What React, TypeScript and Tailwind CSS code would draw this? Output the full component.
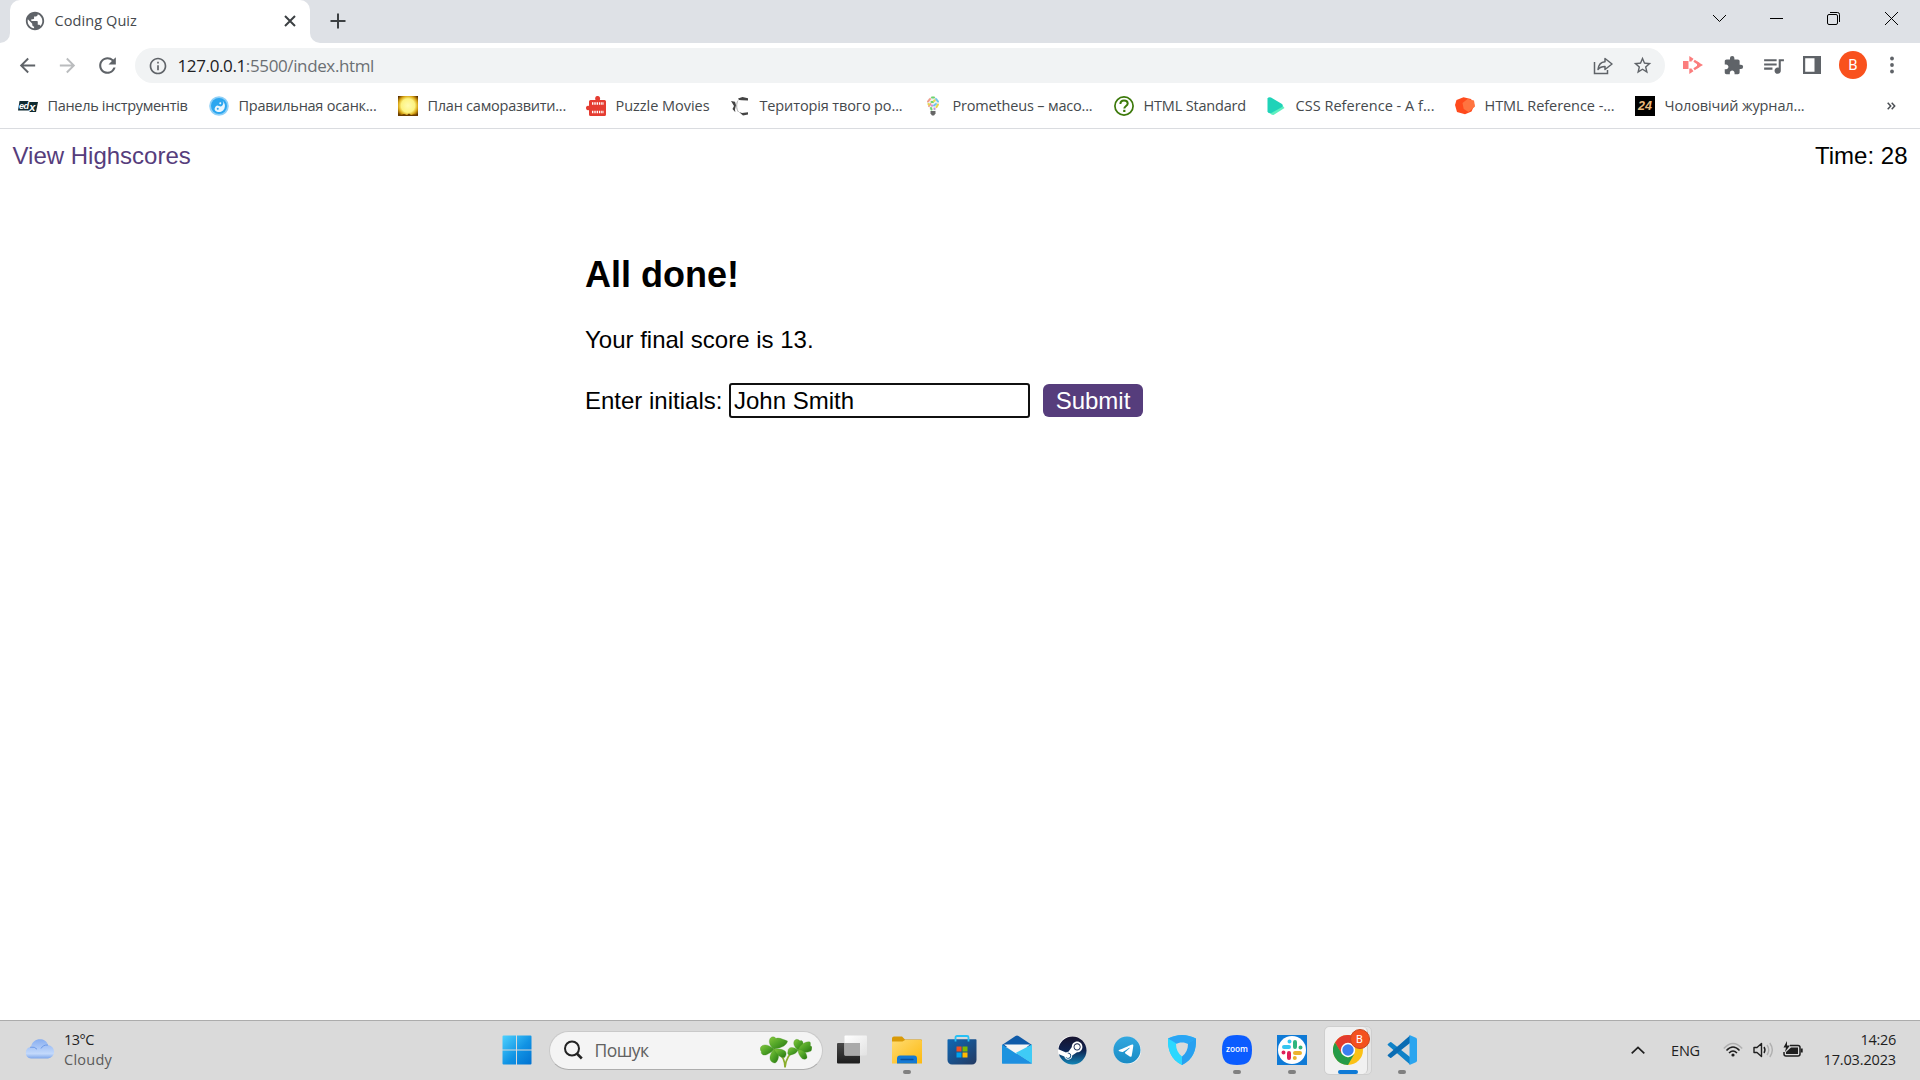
import React, { useLayoutEffect, useRef, useState } from "react";
import { MdArrowBack, MdArrowForward, MdExtension, MdInfoOutline, MdPublic, MdQueueMusic, MdRefresh, MdStarBorder } from "react-icons/md";
import { FaSteam, FaTelegram } from "react-icons/fa6";

/** Single line of text whose letter spacing is adjusted to fill a given width. */
function Fit({ w, className = "", children }: { w: number; className?: string; children: React.ReactNode }) {
  const ref = useRef<HTMLSpanElement>(null);
  const [spacing, setSpacing] = useState(0);
  useLayoutEffect(() => {
    const el = ref.current;
    if (!el) return;
    const count = (el.textContent || "").length;
    setSpacing((w - el.getBoundingClientRect().width) / count);
  }, [w]);
  return (
    <span ref={ref} className={"inline-block whitespace-nowrap shrink-0 " + className} style={{ letterSpacing: spacing }}>
      {children}
    </span>
  );
}

function Globe() {
  return <MdPublic className="size-[22px] text-[#5f6368]" />;
}

function EdxIcon() {
  return (
    <svg viewBox="0 0 20 20" className="size-5">
      <path d="M1.500 5h9l-.3 1H20l-2 10h-6.500l.3-1.500H0z" fill="#0f2a30" />
      <text x="1" y="12.500" fontSize="9" fontWeight="700" fontStyle="italic" fontFamily="Liberation Sans" fill="#fff" textLength="10">ed</text>
      <text x="11.300" y="14.500" fontSize="11" fontWeight="700" fontStyle="italic" fontFamily="Liberation Sans" fill="#fff">x</text>
    </svg>
  );
}
function YinYangIcon() {
  return (
    <svg viewBox="0 0 20 20" className="size-5">
      <circle cx="10" cy="10" r="9.800" fill="#8fd0f7" />
      <circle cx="10" cy="10" r="8" fill="#2ba6f0" />
      <g transform="rotate(25 10 10)">
        <path d="M10 4a6 6 0 0 1 0 12 3 3 0 0 1 0-6 3 3 0 0 0 0-6z" fill="#e9f6fe" />
        <circle cx="10" cy="7" r="1" fill="#e9f6fe" />
        <circle cx="10" cy="13" r="1" fill="#2ba6f0" />
      </g>
    </svg>
  );
}
function SunIcon() {
  return (
    <svg viewBox="0 0 20 20" className="size-5">
      <defs>
        <radialGradient id="sun" cx=".5" cy=".48" r=".68">
          <stop offset="0" stopColor="#fffbb0" />
          <stop offset=".5" stopColor="#fdf380" />
          <stop offset=".72" stopColor="#d9a514" />
          <stop offset=".9" stopColor="#7b4a00" />
          <stop offset="1" stopColor="#3b1c00" />
        </radialGradient>
      </defs>
      <rect width="20" height="20" fill="url(#sun)" />
      <path d="M0 20v-2l3 1 3-1 3 1 2-1.500L13 19l3-.5 4 .5v1z" fill="#6b3d00" />
    </svg>
  );
}
function PuzzleMoviesIcon() {
  return (
    <svg viewBox="0 0 20 20" className="size-5">
      <path d="M5 4h4.500C8.500 1.500 10 0 11.500 0S15 1.500 13.800 4H18.500a1.500 1.500 0 0 1 1.500 1.500v13a1.500 1.500 0 0 1-1.500 1.500H4.500a1.500 1.500 0 0 1-1.500-1.500V14c-2 .7-3-.5-3-2s1-2.700 3-2V5.500A1.500 1.500 0 0 1 4.500 4z" fill="#e53c31" />
      <path d="M6 7.500h12M6 16h12" stroke="#fff" strokeWidth="2.600" strokeDasharray="1.400 .9" />
    </svg>
  );
}
function TerritoryIcon() {
  return (
    <svg viewBox="0 0 20 20" className="size-5">
      <path d="M18 2.200 12.500 1 8 2.600 9 4l3 .3 6 .2zM1 5l4 .8 1 3.500-1 4 .3 3L2.500 13l1.500-3zM9 16l3 1 6-.8v2.400l-5 1z" fill="#444" />
      <path d="M8 4.500C6.300 7 6 13 8.500 16" stroke="#aaa" fill="none" />
    </svg>
  );
}
function BulbIcon() {
  return (
    <svg viewBox="0 0 20 20" className="size-5">
      <path d="M4 6.500a6 6 0 0 1 12 0c0 3-2.500 4.500-3 8H7c-.5-3.500-3-5-3-8z" fill="#eef3ee" />
      <g strokeWidth="2" strokeLinecap="round" fill="none">
        <path d="M5 5.500 7 3M6 10l1.500-2" stroke="#f29a8a" />
        <path d="M9 1.500h2M8.500 6h1.500M8 12l.5 1.500" stroke="#6fd36f" />
        <path d="m13 3 2 2.500M11 9.500l2-1.500" stroke="#6cc4ee" />
        <path d="M15 8.500 13.500 11M5.500 8l.5.5M11 5l.8-.8" stroke="#e8d84c" />
        <path d="M9 9.500v.3M11.500 12.500v.5" stroke="#c98be0" />
      </g>
      <path d="M7.500 15h5v2.500l-1.500 2H9l-1.500-2z" fill="#666" />
    </svg>
  );
}
function HtmlStandardIcon() {
  return (
    <svg viewBox="0 0 20 20" className="size-5" fill="none" stroke="#3c790a">
      <circle cx="10" cy="10" r="9.100" strokeWidth="1.700" fill="#fff" />
      <path d="M6.400 8c0-2.200 1.500-3.500 3.600-3.500s3.700 1.200 3.700 3.100c0 2.400-3.400 2.500-3.400 5" strokeWidth="2" />
      <path d="M9.200 14.900h2.200" strokeWidth="2.200" />
    </svg>
  );
}
function CssReferenceIcon() {
  return (
    <svg viewBox="0 0 20 20" className="size-5">
      <path d="M4 17.500 16.500 9.500 18.500 12 7.500 19q-1.500 0-3.500-1.500z" fill="#5ff0c0" />
      <path d="M1.500 2.500Q2.500.8 5 1.500l11 6.500q1.500 1.500 0 3L5.500 17Q2 18 1.500 15.500z" fill="#1fd3b8" />
    </svg>
  );
}
function HtmlReferenceIcon() {
  return (
    <svg viewBox="0 0 20 20" className="size-5">
      <path d="M1.500 4 8.500 1.200 16 3l3.500 6-3 6.500-6.500 2.800L2 16 0 9z" fill="#ff4a1c" />
      <path d="m7.500 7 5-4L19 4.500l1 6-6.500 5.500-4.800-3z" fill="#ff7440" />
    </svg>
  );
}
function TwentyFourIcon() {
  return (
    <span className="flex size-5 items-center justify-center bg-black font-['Liberation_Sans'] text-[12.5px] font-bold italic leading-none text-[#e9b97a]">24</span>
  );
}

const bookmarks = [
  { label: "Панель інструментів", icon: <EdxIcon />, text: 140, cell: "w-[191px]" },
  { label: "Правильная осанк...", icon: <YinYangIcon />, text: 138, cell: "w-[189px]" },
  { label: "План саморазвити...", icon: <SunIcon />, text: 138.5, cell: "w-[188px]" },
  { label: "Puzzle Movies", icon: <PuzzleMoviesIcon />, text: 94, cell: "w-[144px]" },
  { label: "Територія твого ро...", icon: <TerritoryIcon />, text: 143, cell: "w-[193px]" },
  { label: "Prometheus – масо...", icon: <BulbIcon />, text: 140, cell: "w-[191px]" },
  { label: "HTML Standard", icon: <HtmlStandardIcon />, text: 102.5, cell: "w-[152px]" },
  { label: "CSS Reference - A f...", icon: <CssReferenceIcon />, text: 139, cell: "w-[189px]" },
  { label: "HTML Reference -...", icon: <HtmlReferenceIcon />, text: 130, cell: "w-[180px]" },
  { label: "Чоловічий журнал...", icon: <TwentyFourIcon />, text: 140, cell: "w-[248px]" },
];

function TabStrip() {
  return (
    <div className="flex h-[43px] bg-white">
      <div className="w-[10px] rounded-br-[10px] bg-[#dee1e6]" />
      <div className="flex w-[300px] bg-[#dee1e6]">
        <div className="flex w-full items-center rounded-t-[10px] bg-white pb-px pl-[14px] pr-[14px]">
          <Globe />
          <Fit w={82.5} className="ml-[8.5px] text-[14.5px] leading-5 text-[#45494d]">Coding Quiz</Fit>
          <svg viewBox="0 0 12 12" className="ml-auto size-3" stroke="#3c4043" strokeWidth="2"><path d="m1 1 10 10M11 1 1 11" /></svg>
        </div>
      </div>
      <div className="flex grow items-start rounded-bl-[10px] bg-[#dee1e6]">
        <svg viewBox="0 0 16 16" className="ml-[19.5px] mt-[13px] size-4" stroke="#3c4043" strokeWidth="2"><path d="M8 .5v15M.5 8h15" /></svg>
        <div className="ml-auto mr-[21px] mt-[11px] flex text-black">
          <svg viewBox="0 0 15 15" className="mr-[42px] size-[15px]" fill="none" stroke="currentColor"><path d="m1 4 6.500 6.500L14 4" /></svg>
          <svg viewBox="0 0 15 15" className="mr-[42px] size-[15px]" fill="none" stroke="currentColor"><path d="M1 7.500h13" /></svg>
          <svg viewBox="0 0 15 15" className="mr-[43px] size-[15px]" fill="none" stroke="currentColor"><rect x="1.500" y="3.500" width="10" height="10" rx="1.500" /><path d="M4 1.500h7.500a2 2 0 0 1 2 2V11" /></svg>
          <svg viewBox="0 0 15 15" className="size-[15px]" fill="none" stroke="currentColor"><path d="m1 1 13 13M14 1 1 14" /></svg>
        </div>
      </div>
    </div>
  );
}

function Toolbar() {
  return (
    <div className="flex h-[44px] items-center bg-white pl-[16px] text-[#5f6368]">
      <MdArrowBack className="size-[23px]" />
      <MdArrowForward className="ml-[17px] size-[23px] text-[#babcbe]" />
      <MdRefresh className="ml-[16px] size-[25px]" />
      <div className="ml-[15px] mt-[1px] flex h-[35px] w-[1530px] items-center rounded-full bg-[#f1f3f4] pl-[12.5px]">
        <MdInfoOutline className="size-[20px]" />
        <Fit w={196.500} className="ml-[10px] text-[17px] leading-6 text-[#6b6f73]"><span className="text-[#202124]">127.0.0.1</span>:5500/index.html</Fit>
        <svg viewBox="0 0 20 18" className="ml-auto mr-[19px] h-[18px] w-5" fill="none" stroke="currentColor" strokeWidth="1.500">
          <path d="M1.500 5v11.500h13V13" />
          <path d="M12 1.500 19 7l-7 5.500V9.500C9 9.500 7 10 5 12.500 5.500 8 8 5 12 4.700z" strokeLinejoin="round" />
        </svg>
        <MdStarBorder className="mr-[12px] size-[21px]" />
      </div>
      <svg viewBox="0 0 20 18" className="ml-[18px] h-[18px] w-5" fill="none">
        <path d="M0 5h5.500v8H0z" fill="#fb7d7d" />
        <path d="M7.500 5.500V2.300L16 8M16 10 7.500 15.700V12.500" stroke="#fb7d7d" strokeWidth="2.400" strokeDasharray="6 1.500" />
        <path d="M14 5.500 20 9l-6 3.500z" fill="#fb7d7d" />
      </svg>
      <MdExtension className="ml-[19.5px] size-[21px]" />
      <MdQueueMusic className="ml-[17px] size-[25px]" />
      <svg viewBox="0 0 18 18" className="ml-[17.500px] size-[18px]" fill="none" stroke="currentColor" strokeWidth="2.200"><path d="M1.100 1.100h15.800v15.800H1.100z" /><path d="M11.500 1h5.500v16h-5.500z" fill="currentColor" strokeWidth="0" /></svg>
      <span className="ml-[18px] flex size-7 items-center justify-center rounded-full bg-[#f9511d] font-[Roboto] text-[15px] text-white">B</span>
      <svg viewBox="0 0 4 18" className="ml-[23px] h-[18px] w-1" fill="currentColor"><circle cx="2" cy="2.500" r="1.900" /><circle cx="2" cy="9" r="1.900" /><circle cx="2" cy="15.500" r="1.900" /></svg>
    </div>
  );
}

function BookmarksBar() {
  return (
    <div className="flex h-[42px] items-start border-b border-[#dadce0] bg-white pl-[18px] pt-[9px] text-[#45494d]">
      {bookmarks.map((b) => (
        <div key={b.label} className={"flex h-5 shrink-0 items-center " + b.cell}>
          <span className="mr-[9.500px] size-5">{b.icon}</span>
          <Fit w={b.text} className="text-[14.5px] leading-5">{b.label}</Fit>
        </div>
      ))}
      <svg viewBox="0 0 9 8" className="ml-[4px] mt-[6px] h-2 w-[9px]" fill="none" stroke="#4b4f54" strokeWidth="1.500"><path d="m.7.7 3 3.300-3 3.300M4.700.7l3 3.300-3 3.300" /></svg>
    </div>
  );
}

function QuizPage() {
  return (
    <main className="grow bg-white font-['Liberation_Sans',Arial,sans-serif] text-[24px] leading-7 text-black">
      <div className="flex justify-between px-[12.5px] pt-[13px]">
        <a className="text-[#563d7c]">View Highscores</a>
        <span>Time: 28</span>
      </div>
      <section className="mx-auto mt-[84px] w-[750px]">
        <h2 className="text-[36px] font-bold leading-[42px]">All done!</h2>
        <p className="mt-[30px]">Your final score is 13.</p>
        <div className="mt-[29px] flex items-center">
          <span className="w-[144px] whitespace-nowrap">Enter initials:</span>
          <input readOnly value="John Smith" className="h-[35px] w-[301px] rounded-[3px] border-2 border-[#101010] bg-white px-[3px] outline-none" />
          <button className="ml-[13px] h-[33px] w-[100px] rounded-[6px] bg-[#563d7c] text-white">Submit</button>
        </div>
      </section>
    </main>
  );
}

function StartIcon() {
  return (
    <svg viewBox="0 0 30 30" className="size-[30px]">
      <defs><linearGradient id="win" x1="0" y1="0" x2="30" y2="30" gradientUnits="userSpaceOnUse"><stop stopColor="#4fd3ff" /><stop offset=".55" stopColor="#1193e4" /><stop offset="1" stopColor="#0070d0" /></linearGradient></defs>
      <path d="M1.500.5H14v14H.5v-13a1 1 0 0 1 1-1zM15 .5h13.500a1 1 0 0 1 1 1v13H15zM.5 15.500H14v14H1.500a1 1 0 0 1-1-1zM15 15.500h14.500v13a1 1 0 0 1-1 1H15z" fill="url(#win)" />
    </svg>
  );
}
function Clover() {
  return (
    <svg viewBox="0 0 52 32" className="h-8 w-[52px]">
      <defs><linearGradient id="leaf" x1="0" y1="0" x2="1" y2="1"><stop stopColor="#86c83c" /><stop offset=".5" stopColor="#4fa327" /><stop offset="1" stopColor="#27730f" /></linearGradient></defs>
      <path d="M17 16c5 3 8 9 8 15.500M36 14c-7 3-10 8-11 17.500" stroke="#8aad2c" strokeWidth="1.700" fill="none" />
      <g fill="url(#leaf)" stroke="#3f8f1e" strokeWidth=".3">
        <path d="M14 13C9 10 8 4 11 1.500 13 0 15 1 16 2.500 19 1 24 4 27.500 5 27 9 22 12 14 13z" />
        <path d="M14 13C8 8 3 8 .8 11c-1.300 2 0 4 .5 4.500C.5 18.500 4 20 7 18.500 10 17 13 15 14 13z" />
        <path d="M14 13c-5 6-5 11-2 13 2 1.300 3.500 1 4 .5 1-1 3-4 2.500-8z" />
        <path d="M14 13c3 0 8-.5 11 2 2 2 1 5-.5 6.500C20 22 16 18 14 13z" />
        <path d="M38 14c-5-4-5-8-3-10 2-1.500 4 0 5 1 1.500-1 3 0 3 2 0 3-3 6-5 7z" />
        <path d="M38 14c2-5 7-9 12-8 1 1.500 0 3 .5 4 2 0 1.500 3 .5 5-4 2-10 2-13-1z" />
        <path d="M38 14c5-1 9 3 9 8-2 2-4 1-5 .5-2-2-4-5-4-8.500z" />
        <path d="M38 14c-5-4-10-3-10 1 0 1-1 3 1 4 4 0 8-2 9-5z" />
      </g>
    </svg>
  );
}
function TaskViewIcon() {
  return (
    <svg viewBox="0 0 30 30" className="size-[30px]">
      <defs>
        <linearGradient id="tv1" x1="0" y1="0" x2="0" y2="1"><stop stopColor="#484848" /><stop offset="1" stopColor="#1d1d1d" /></linearGradient>
        <linearGradient id="tv2" x1="0" y1="0" x2="1" y2="1"><stop stopColor="#fff" /><stop offset="1" stopColor="#e2e2e2" /></linearGradient>
      </defs>
      <rect y="8" width="23" height="20.500" rx="1" fill="url(#tv1)" />
      <rect x="7.500" y=".5" width="22.500" height="20" rx="1" fill="url(#tv2)" />
      <path d="M7.500 8H23v12.500H7.500z" fill="#aaa" />
    </svg>
  );
}
function FolderIcon() {
  return (
    <svg viewBox="0 0 30 30" className="size-[30px]">
      <defs><linearGradient id="fold" x1="0" y1="0" x2="1" y2="1"><stop stopColor="#ffdb70" /><stop offset="1" stopColor="#fdb90f" /></linearGradient></defs>
      <path d="M0 3.500a2 2 0 0 1 2-2h8l3 3h16a1 1 0 0 1 1 1V12H0z" fill="#d99a07" />
      <path d="M0 6.500h10.500l2.500-1.500h16a1 1 0 0 1 1 1V28.500H0z" fill="url(#fold)" />
      <path d="M5 28.500v-5a3 3 0 0 1 3-3h14a3 3 0 0 1 3 3v5z" fill="#1479d3" />
      <path d="M9 24.500h12" stroke="#0a4f9b" strokeWidth="1.300" strokeLinecap="round" />
    </svg>
  );
}
function StoreIcon() {
  return (
    <svg viewBox="0 0 30 30" className="size-[30px]">
      <defs><linearGradient id="store" x1="0" y1="0" x2="1" y2="1"><stop stopColor="#1068b4" /><stop offset="1" stopColor="#243a62" /></linearGradient></defs>
      <path d="M.5 5a.7.7 0 0 1 .7-.7h27.600a.7.7 0 0 1 .7.7v20a4.500 4.500 0 0 1-4.500 4.500H5A4.500 4.500 0 0 1 .5 25z" fill="url(#store)" />
      <path d="M8.500 6.500v-4a1.500 1.500 0 0 1 1.500-1.500h10a1.500 1.500 0 0 1 1.500 1.500v4" fill="none" stroke="#27c0f5" strokeWidth="1.800" />
      <path d="M9.500 11.500h5v5h-5z" fill="#f25022" /><path d="M15.500 11.500h5v5h-5z" fill="#7fba00" /><path d="M9.500 17.500h5v5h-5z" fill="#00a4ef" /><path d="M15.500 17.500h5v5h-5z" fill="#ffb900" />
    </svg>
  );
}
function MailIcon() {
  return (
    <svg viewBox="0 0 30 30" className="size-[30px]">
      <path d="M0 10 13.500 1Q15 0 16.500 1L30 10v2H0z" fill="#0f5aa8" />
      <path d="M2 9.500h26L15 20z" fill="#f5f5f5" />
      <path d="M0 9.500 30 28.500H0z" fill="#1b93df" />
      <path d="M30 9.500v19L13.500 18z" fill="#3fcbf6" />
      <path d="m0 28.500 14-9.800 2 .8 14 9z" fill="#1e8fe0" />
    </svg>
  );
}
function SteamIcon() {
  return (
    <span className="flex size-7 items-center justify-center rounded-full bg-white">
      <svg className="size-0"><defs><linearGradient id="steam" x1="0" y1="0" x2="0" y2="1"><stop stopColor="#17132e" /><stop offset=".5" stopColor="#0e2350" /><stop offset="1" stopColor="#1286b8" /></linearGradient></defs></svg>
      <FaSteam className="size-[29px] shrink-0" fill="url(#steam)" />
    </span>
  );
}
function TelegramIcon() {
  return (
    <span className="flex size-[27px] items-center justify-center rounded-full bg-white">
      <svg className="size-0"><defs><linearGradient id="tg" x1="0" y1="0" x2="0" y2="1"><stop stopColor="#32a8e0" /><stop offset="1" stopColor="#1a8bc4" /></linearGradient></defs></svg>
      <FaTelegram className="size-7 shrink-0" fill="url(#tg)" />
    </span>
  );
}
function ShieldIcon() {
  return (
    <svg viewBox="0 0 30 30" className="size-[30px]">
      <path d="M15 0c5 0 9 1.200 14 3.500C29.500 15 26 24.500 15 30 4 24.500.5 15 1 3.500 6 1.200 10 0 15 0z" fill="#2bc4fb" />
      <path d="M15 0c5 0 9 1.200 14 3.500L20 9l-10 0-9-5.500C6 1.200 10 0 15 0z" fill="#2aa5f4" />
      <path d="M29 3.500C29.500 15 26 24.500 15 30v-9l5-12z" fill="#28a0f0" />
      <path d="M1 3.500 10 9l5 12v9C4 24.500.5 15 1 3.500z" fill="#2bd8ff" />
      <path d="M15 7.500c2.500 0 4.500.7 6 1.500 0 5-2 9.500-6 12.500-4-3-6-7.500-6-12.500 1.500-.8 3.500-1.500 6-1.500z" fill="#dadada" />
    </svg>
  );
}
function ZoomIcon() {
  return (
    <svg viewBox="0 0 30 30" className="size-[30px]">
      <path d="M15 0c11 0 15 4 15 15s-4 15-15 15S0 26 0 15 4 0 15 0z" fill="#0b5cff" />
      <text x="4" y="17.200" fontSize="8" fontWeight="600" fontFamily="Open Sans" fill="#fff" textLength="22" lengthAdjust="spacingAndGlyphs">zoom</text>
    </svg>
  );
}
function SlackIcon() {
  return (
    <svg viewBox="0 0 30 30" className="size-[30px]">
      <path d="M0 0h30v30H0z" fill="#0f7ad6" />
      <circle cx="15" cy="15" r="14" fill="#fff" />
      <g strokeWidth="4" strokeLinecap="round">
        <path d="M7 12h5M12.500 6.500h0" stroke="#36c5f0" />
        <path d="M18 7v5M23.500 12.500h0" stroke="#2eb67d" />
        <path d="M18 18h5M17.800 23h0" stroke="#ecb22e" />
        <path d="M12 18v5M6.500 17.500h0" stroke="#e01e5a" />
      </g>
    </svg>
  );
}
function ChromeIcon() {
  return (
    <svg viewBox="0 0 30 30" className="size-[30px]">
      <circle cx="15" cy="15" r="15" fill="#fbc116" />
      <path d="M2 7.500A15 15 0 0 1 28 7.500L15 8.500 8.500 19z" fill="#e33b2e" />
      <path d="M28 7.500H15v4h9z" fill="#e33b2e" />
      <path d="M2 7.500 8.800 18.800 15 22.500l6.300-3.500L15 30A15 15 0 0 1 2 7.500z" fill="#259b48" />
      <circle cx="15" cy="15" r="7.200" fill="#fff" />
      <circle cx="15" cy="15" r="5.700" fill="#3c7ff0" />
    </svg>
  );
}
function VsCodeIcon() {
  return (
    <svg viewBox="0 0 30 30" className="size-[30px]">
      <path d="m1.500 8.500 1.600-1.200q.8-.5 1.600.1L23 22v7.500L.7 10q-.5-.9.8-1.500z" fill="#0f82c8" />
      <path d="m1.500 21.500 1.600 1.200q.8.5 1.600-.1L23 8V.5L.7 20q-.5.900.8 1.500z" fill="#0a6cb3" />
      <path d="m22.500 0 6.400 2.800q1.100.6 1.100 1.700v21q0 1.100-1.100 1.700L22.500 30z" fill="#2ba5ef" />
    </svg>
  );
}

const apps = [
  { name: "taskview", icon: <TaskViewIcon />, running: false },
  { name: "explorer", icon: <FolderIcon />, running: true },
  { name: "store", icon: <StoreIcon />, running: false },
  { name: "mail", icon: <MailIcon />, running: false },
  { name: "steam", icon: <SteamIcon />, running: false },
  { name: "telegram", icon: <TelegramIcon />, running: false },
  { name: "shield", icon: <ShieldIcon />, running: false },
  { name: "zoom", icon: <ZoomIcon />, running: true },
  { name: "slack", icon: <SlackIcon />, running: true },
];

function AppCell({ icon, running }: { icon: React.ReactNode; running: boolean }) {
  return (
    <div className="flex h-[59px] w-[55px] shrink-0 flex-col items-center pt-[14px]">
      <div className="flex h-[30px] items-center">{icon}</div>
      {running && <div className="mt-[5px] h-1 w-2 rounded-full bg-[#808080]" />}
    </div>
  );
}

function Taskbar() {
  return (
    <footer className="flex h-[60px] border-t border-[#acacac] bg-[#dadada] text-[14.5px] leading-5 text-[#1f1f1f]">
      <div className="flex w-[501.5px] shrink-0 pl-[25px] pt-[9px]">
        <svg viewBox="0 0 30 20" className="mt-[9px] h-5 w-[30px]">
          <defs><linearGradient id="cl" x1="0" y1="0" x2="0" y2="1"><stop stopColor="#88aef0" /><stop offset=".75" stopColor="#c3d9fb" /><stop offset="1" stopColor="#7ea6ea" /></linearGradient></defs>
          <path d="M6 19.500a6 5.800 0 0 1 0-11.500c1.500-10 15-10 17-2a7 6.800 0 0 1 0 13.500z" fill="url(#cl)" />
          <path d="M5 8.200q5-.8 7 2M16 9.500q2-3.800 7-3.500" stroke="#6f9be8" fill="none" />
        </svg>
        <div className="ml-[9px] flex flex-col">
          <Fit w={30} className="self-start">13°C</Fit>
          <Fit w={48} className="self-start text-[#5a5a5a]">Cloudy</Fit>
        </div>
      </div>
      <div className="mt-[14px] h-[30px] shrink-0"><StartIcon /></div>
      <div className="ml-[17px] mr-[2px] mt-[10px] flex h-[39px] w-[274px] shrink-0 items-center rounded-full border border-[#c9c9c9] border-b-[#adadad] bg-[#f4f4f4] pb-px pl-[13px] pr-[10px]">
        <svg viewBox="0 0 20 20" className="size-5" fill="none" stroke="#222" strokeWidth="2"><circle cx="9" cy="8.500" r="7" /><path d="m13.800 13.500 5 5" strokeWidth="2.600" /></svg>
        <Fit w={54} className="ml-[12px] text-[17.5px] leading-6 text-[#616161]">Пошук</Fit>
        <span className="ml-auto mt-[4px]"><Clover /></span>
      </div>
      {apps.map((a) => <AppCell key={a.name} icon={a.icon} running={a.running} />)}
      <div className="ml-[4px] mr-[3px] mt-[5px] flex h-[49px] w-[48px] shrink-0 rounded-[5px] border border-[#cfcfcf] bg-[#e4e4e4]">
        <div className="relative flex w-[43px] flex-col items-center rounded-[5px] border-r border-[#cacaca] bg-[#f1f1f1] pl-[4px] pt-[8px]">
          <ChromeIcon />
          <div className="mt-[5px] h-1 w-5 rounded-full bg-[#0f7ad6]" />
          <span className="absolute left-[25px] top-[2px] flex size-5 items-center justify-center rounded-full border border-[#c9471f] bg-[#f4511e] font-[Roboto] text-[11px] leading-none text-white">B</span>
        </div>
      </div>
      <AppCell icon={<VsCodeIcon />} running />
      <div className="ml-auto flex shrink-0 pr-[24px]">
        <svg viewBox="0 0 14 8" className="mt-[25px] h-2 w-[14px]" fill="none" stroke="#1f1f1f" strokeWidth="1.700"><path d="m.7 7.300 6.300-6 6.300 6" /></svg>
        <Fit w={29} className="ml-[26px] mt-[20px]">ENG</Fit>
        <svg viewBox="0 0 20 16" className="ml-[23px] mt-[21px] h-4 w-5" fill="none" stroke="#1f1f1f" strokeWidth="1.500">
          <path d="M.8 6.500Q10-3.500 19.200 6.500" stroke="#b0b0b0" /><path d="M3.500 8.500Q10 1.500 16.500 8.500M6 11q4-4 8 0" /><circle cx="10" cy="13" r="1.600" fill="#1f1f1f" strokeWidth="0" />
        </svg>
        <svg viewBox="0 0 20 16" className="ml-[10px] mt-[21px] h-4 w-5" fill="none" stroke="#1f1f1f" strokeWidth="1.400">
          <path d="M1 5.500h3L8.500 1.500v13L4 10.500H1z" strokeLinejoin="round" /><path d="M11 5q2 3 0 6" /><path d="M14 3q3.500 5 0 10M16.800 1q5 7 0 14" stroke="#b0b0b0" />
        </svg>
        <svg viewBox="0 0 20 16" className="ml-[10px] mt-[20px] h-4 w-5" fill="none" stroke="#1f1f1f" strokeWidth="1.500">
          <path d="M7 4.500h8a2 2 0 0 1 2 2V13a2 2 0 0 1-2 2H3a2 2 0 0 1-2-2v-2" /><path d="M3 13V11L8 6.500h7V13z" fill="#1f1f1f" strokeWidth="0" /><path d="M18.700 7.500v4" strokeWidth="2" /><path d="M4 0 .5 6.500H3L2 11l5-6.500H4z" fill="#1f1f1f" strokeWidth="0" />
        </svg>
        <div className="ml-[20px] flex w-[73px] flex-col items-end pt-[9px]">
          <Fit w={35.5}>14:26</Fit>
          <Fit w={72.5}>17.03.2023</Fit>
        </div>
      </div>
    </footer>
  );
}

export default function App() {
  return (
    <div className="flex h-[1080px] w-[1920px] flex-col overflow-hidden bg-white font-['Open_Sans','Noto_Sans',sans-serif]">
      <TabStrip />
      <Toolbar />
      <BookmarksBar />
      <QuizPage />
      <Taskbar />
    </div>
  );
}
